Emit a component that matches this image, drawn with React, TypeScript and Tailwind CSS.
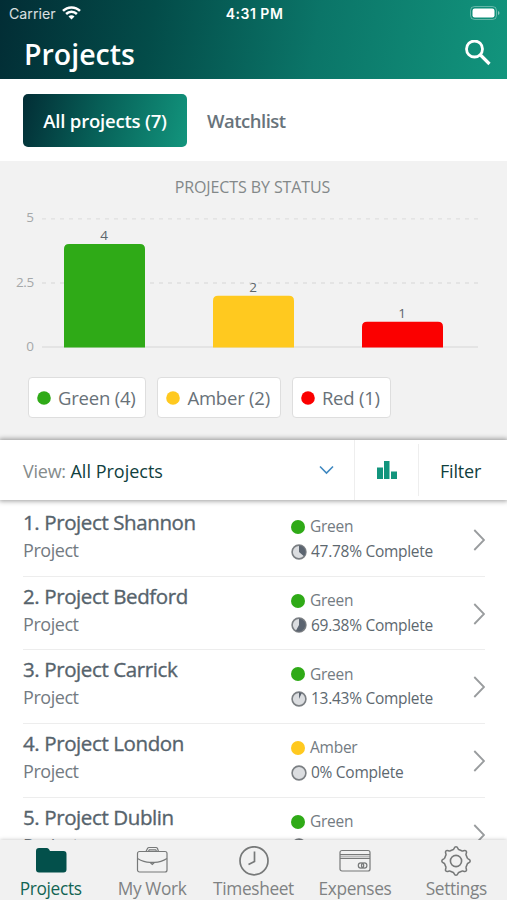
import React from 'react';

interface Project {
  name: string;
  status: 'Green' | 'Amber' | 'Red';
  percent: number;
  slice: number;
}

const COLORS = { Green: '#2faa17', Amber: '#ffc91f', Red: '#fb0000' };

const projects: Project[] = [
  { name: 'Project Shannon', status: 'Green', percent: 47.78, slice: 0.36 },
  { name: 'Project Bedford', status: 'Green', percent: 69.38, slice: 0.58 },
  { name: 'Project Carrick', status: 'Green', percent: 13.43, slice: 0.07 },
  { name: 'Project London', status: 'Amber', percent: 0, slice: 0 },
  { name: 'Project Dublin', status: 'Green', percent: 52.1, slice: 0.5 },
];

const bars = [
  { status: 'Green' as const, count: 4, x: 64 },
  { status: 'Amber' as const, count: 2, x: 213 },
  { status: 'Red' as const, count: 1, x: 362 },
];

const StatusBar = () => (
  <div className="flex h-[26px] items-center justify-between pt-px pr-[7px] pl-[9px] font-['Inter'] text-white">
    <div className="flex w-[100px] items-center gap-[6px]">
      <span className="text-[14.200px] text-white/85">Carrier</span>
      <svg width="19" height="14" viewBox="0 0 19 14" fill="none" stroke="white" strokeWidth="2.5">
        <path d="M1 4.9C5.7 .2 13.300 .2 18 4.900" />
        <path d="M4.100 8C7.100 5.100 11.900 5.100 14.900 8" />
        <path d="M9.500 13.500L6.500 10.500C8.200 8.900 10.800 8.900 12.500 10.500Z" fill="white" stroke="none" />
      </svg>
    </div>
    <span className="text-[14px] font-semibold tracking-[0.5px]">4:31 PM</span>
    <div className="flex w-[100px] justify-end">
      <svg className="-mt-px" width="30" height="14" viewBox="0 0 30 14" fill="none">
        <rect x=".5" y=".5" width="26" height="13" rx="4" stroke="white" strokeOpacity=".35" />
        <rect x="2.500" y="2.500" width="22" height="9" rx="2.200" fill="white" />
        <path d="M28 5v4c2-.8 2-3.200 0-4z" fill="white" fillOpacity=".5" />
      </svg>
    </div>
  </div>
);

const StatusChart = () => (
  <svg className="block" width="507" height="160" viewBox="0 200 507 160">
    <g stroke="#dfdfdf" strokeWidth="1.3">
      <line x1="42" x2="478" y1="218.800" y2="218.800" strokeDasharray="4 5" />
      <line x1="42" x2="478" y1="283" y2="283" strokeDasharray="4 5" />
      <line x1="42" x2="478" y1="347" y2="347" />
    </g>
    <g fill="#a5a8a9" fontSize="13.500" textAnchor="end">
      <text x="34" y="222">5</text>
      <text x="34" y="286.500" letterSpacing="-0.3">2.5</text>
      <text x="34" y="350.500">0</text>
    </g>
    {bars.map((bar) => {
      const top = 347.5 - bar.count * 25.85;
      return (
        <g key={bar.status}>
          <path d={`M${bar.x} 347.5V${top + 5}q0-5 5-5h71q5 0 5 5V347.500z`} fill={COLORS[bar.status]} />
          <text x={bar.x + 40} y={top - 4} fontSize="13.500" fill="#5d666b" textAnchor="middle">{bar.count}</text>
        </g>
      );
    })}
  </svg>
);

const Pie = ({ slice }: { slice: number }) => {
  const angle = slice * Math.PI * 2;
  const x = 8 + 6.5 * Math.sin(angle);
  const y = 8 - 6.5 * Math.cos(angle);
  return (
    <svg width="16" height="16" viewBox="0 0 16 16">
      <circle cx="8" cy="8" r="6.900" fill="#dbdde0" stroke="#7b7f83" strokeWidth="1.600" />
      {slice > 0 && <path d={`M8 8V1.500A6.500 6.500 0 ${slice > 0.5 ? 1 : 0} 1 ${x} ${y}Z`} fill="#5b6470" />}
    </svg>
  );
};

const ProjectRow = ({ project, index }: { project: Project; index: number }) => (
  <div className="mr-[22px] ml-[23px] flex h-[73.700px] shrink-0 border-b border-[#ededed]">
    <div className="w-[268px] shrink-0 pt-[5px]">
      <div className="text-[20.500px] leading-[28px] tracking-[-0.400px] text-[#56636c] [-webkit-text-stroke:0.350px_#56636c]">{index + 1}. {project.name}</div>
      <div className="pt-px text-[18px] leading-[26px] tracking-[-0.450px] text-[#737b82]">Project</div>
    </div>
    <div className="w-[182px] shrink-0 pt-[12px]">
      <div className="flex h-[24px] items-center gap-[5px] text-[15.500px] tracking-[-0.250px] text-[#737b82]">
        <svg width="14" height="14" viewBox="0 0 14 14"><circle cx="7" cy="7" r="7" fill={COLORS[project.status]} /></svg>
        {project.status}
      </div>
      <div className="flex h-[25px] items-center gap-[4px] text-[15.500px] tracking-[-0.280px] whitespace-nowrap text-[#5d686f]">
        <Pie slice={project.slice} />
        {project.percent}% Complete
      </div>
    </div>
    <svg className="mt-[26px] shrink-0" width="12" height="22" viewBox="0 0 12 22" fill="none" stroke="#999c9e" strokeWidth="1.800">
      <path d="M1.300 1l9.700 10L1.300 21" />
    </svg>
  </div>
);

const tabs = [
  {
    label: 'Projects',
    icon: <path d="M1 5a3 3 0 0 1 3-3h7.500a3 3 0 0 1 2.500 1.300L15 5h13.500a3 3 0 0 1 3 3v15.500a3 3 0 0 1-3 3H4a3 3 0 0 1-3-3z" fill="#03504b" stroke="none" />,
  },
  {
    label: 'My Work',
    icon: (
      <>
        <rect x="1.500" y="5.500" width="29.500" height="20.500" rx="2" />
        <path d="M10 5.500L11.500 2.500Q12 1.500 13 1.500H20Q21 1.500 21.500 2.500L22.500 5.500M12.500 5L13.300 3.800H19.700L20.500 5M1.500 12.500Q8 16.300 14 16.300L16.300 18.500L18.600 16.300Q25 16.300 31 12.500M14 16.300H18.600" />
      </>
    ),
  },
  {
    label: 'Timesheet',
    icon: (
      <g strokeWidth="1.700">
        <circle cx="16" cy="14.800" r="14" />
        <path d="M16.500 5.500V15.500L10.500 18.500" />
      </g>
    ),
  },
  {
    label: 'Expenses',
    icon: (
      <>
        <rect x="1" y="4.500" width="30" height="20.500" rx="2" />
        <path d="M1 8.500H31M1 12.500H31" />
        <path d="M1 10.500H31" strokeWidth="2" strokeOpacity=".45" />
        <circle cx="22" cy="19.500" r="2.700" />
        <circle cx="25.200" cy="19.500" r="2.700" />
      </>
    ),
  },
  {
    label: 'Settings',
    icon: (
      <g strokeWidth="1.600">
        <circle cx="16" cy="15" r="5.600" />
        <path strokeLinejoin="round" d="M13.300 3.600C14.200 3.200 14 .8 16 .8S17.800 3.200 18.700 3.600L22.200 5C23.100 5.400 24.700 3.600 26.100 5S25.600 7.900 26 8.800L27.400 12.300C27.800 13.200 30.200 13 30.200 15S27.800 16.800 27.400 17.700L26 21.200C25.600 22.100 27.400 23.700 26.100 25S23.100 24.600 22.200 25L18.700 26.400C17.800 26.800 18 29.200 16 29.200S14.200 26.800 13.300 26.400L9.800 25C8.900 24.600 7.300 26.400 5.900 25S6.400 22.100 6 21.200L4.600 17.700C4.200 16.800 1.800 17 1.800 15S4.200 13.200 4.600 12.300L6 8.800C6.400 7.900 4.600 6.300 5.900 5S8.900 5.400 9.800 5Z" />
      </g>
    ),
  },
];

const App: React.FC = () => (
  <div className="flex h-[900px] w-[507px] flex-col overflow-hidden bg-white font-['Open_Sans',sans-serif]">
    <header className="h-[79px] shrink-0 bg-[linear-gradient(100deg,#022d35_0%,#034c49_30%,#0b7568_62%,#12957d_100%)]">
      <StatusBar />
      <div className="flex h-[53px] items-center justify-between pr-[16px] pl-[24px]">
        <h1 className="pt-[3px] text-[28.500px] leading-none font-semibold text-white">Projects</h1>
        <svg width="26" height="26" viewBox="0 0 26 26" fill="none" stroke="white" strokeWidth="2.800">
          <circle cx="9.500" cy="9" r="8" />
          <path d="M15 14.500L24.500 24" strokeWidth="3.200" />
        </svg>
      </div>
    </header>

    <div className="flex h-[82px] shrink-0 items-center gap-5 pl-[23px] text-[18.500px] font-semibold">
      <button className="h-[53px] w-[164px] rounded-[5px] bg-[linear-gradient(105deg,#022d35_0%,#075f57_45%,#12957d_100%)] pt-[2px] tracking-[-0.200px] text-white">
        All projects (7)
      </button>
      <span className="pt-[2px] tracking-[-0.500px] text-[#68737b]">Watchlist</span>
    </div>

    <section className="h-[279px] shrink-0 bg-[#f2f2f2]">
      <h2 className="h-[39px] pt-[14px] pr-[2px] text-center text-[16px] leading-[24px] tracking-[-0.100px] text-[#838889]">PROJECTS BY STATUS</h2>
      <StatusChart />
      <div className="flex gap-[11px] pt-[17px] pl-[28px]">
        {bars.map((bar) => (
          <div key={bar.status} className="flex h-[41px] items-center gap-[7px] rounded-[4px] border border-[#dedede] bg-white pr-[10px] pl-[8px] text-[18.500px] tracking-[-0.220px] whitespace-nowrap text-[#687178]">
            <svg width="14" height="14" viewBox="0 0 14 14"><circle cx="7" cy="7" r="6.800" fill={COLORS[bar.status]} /></svg>
            {bar.status} ({bar.count})
          </div>
        ))}
      </div>
    </section>

    <div className="z-10 flex h-[60px] shrink-0 items-center bg-white text-[18px] shadow-[0_0_5px_1px_rgba(0,0,0,0.4)]">
      <div className="flex h-full w-[355px] items-center justify-between border-r border-[#eeeeee] pr-[20px] pl-[23px]">
        <span className="pt-[2px] text-[#10403e]"><span className="tracking-[-0.250px] text-[#858b8b]">View:</span> All Projects</span>
        <svg width="15" height="10" viewBox="0 0 15 10" fill="none" stroke="#3f88c0" strokeWidth="1.600">
          <path d="M1 1.500l6.500 6.500L14 1.500" />
        </svg>
      </div>
      <div className="flex h-[52px] w-[64px] items-center justify-center border-r border-[#eeeeee]">
        <svg width="20" height="18" viewBox="0 0 20 18" fill="#12957d">
          <path d="M0 6.500h6V18H0zM7 0h5.500v18H7zM14 10.500h6V18h-6z" />
        </svg>
      </div>
      <span className="flex-1 pt-[2px] pl-[21px] tracking-[-0.200px] text-[#10403e]">Filter</span>
    </div>

    <main className="flex min-h-0 flex-1 flex-col overflow-hidden pt-[3px]">
      {projects.map((project, index) => (
        <ProjectRow key={project.name} project={project} index={index} />
      ))}
    </main>

    <nav className="z-10 flex h-[60px] shrink-0 bg-[#f1f1f1] shadow-[0_0_4px_rgba(0,0,0,0.25)]">
      {tabs.map((tab, index) => (
        <div key={tab.label} className="flex flex-1 flex-col items-center pt-[6px]">
          <svg className="shrink-0" width="32" height="30" viewBox="0 0 32 30" fill="none" stroke="#777979" strokeWidth="1.200">{tab.icon}</svg>
          <span className={`text-[17.300px] leading-[26px] tracking-[-0.350px] whitespace-nowrap ${index === 0 ? 'text-[#126453]' : 'text-[#7f8283]'}`}>{tab.label}</span>
        </div>
      ))}
    </nav>
  </div>
);

export default App;
